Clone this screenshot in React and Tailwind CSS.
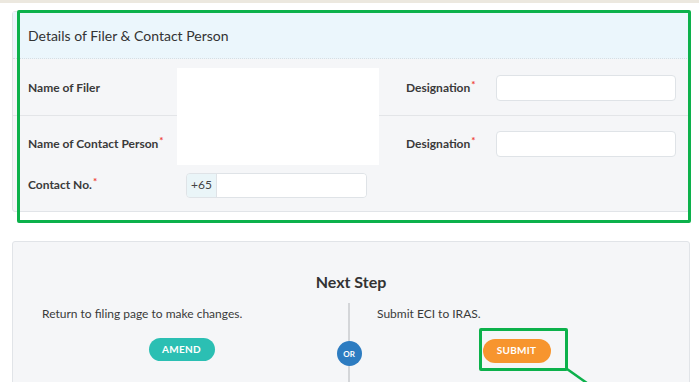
const Req = () => <span className="text-[#ef4136] text-[10px] font-bold align-top leading-none ml-[1px]">*</span>;

const Label = ({ children, required }) => (
  <div className="text-[12px] font-bold text-[#3a3a3a]">
    {children}
    {required && <Req />}
  </div>
);

const TextInput = ({ w = "w-[180px]" }) => (
  <div className={`${w} h-[26px] bg-white border border-[#dfe3e7] rounded-[4px]`} />
);

const FilerDetails = () => (
  <div className="relative ml-[12px] mr-[9px] mt-[8px] bg-[#f5f6f8] border border-[#e1e4e8] rounded-[3px]">
    <div className="h-[47px] bg-[#ebf6fc] border-b border-dotted border-[#d7dde2] flex items-center pl-[15px] text-[14px] text-[#333]">
      Details of Filer &amp; Contact Person
    </div>
    <div className="h-[57px] pt-[2px] border-b border-[#e3e5e8] flex items-center pl-[15px]">
      <div className="w-[158px]">
        <Label>Name of Filer</Label>
      </div>
      <div className="w-[220px]" />
      <div className="w-[90px]">
        <Label required>Designation</Label>
      </div>
      <TextInput />
    </div>
    <div className="h-[52px] pt-[4px] flex items-center pl-[15px]">
      <div className="w-[158px]">
        <Label required>Name of Contact Person</Label>
      </div>
      <div className="w-[220px]" />
      <div className="w-[90px]">
        <Label required>Designation</Label>
      </div>
      <TextInput />
    </div>
    <div className="h-[34px] flex items-center pl-[15px] mb-[9px]">
      <div className="w-[158px]">
        <Label required>Contact No.</Label>
      </div>
      <div className="flex h-[25px] border border-[#dfe3e7] rounded-[4px] overflow-hidden">
        <div className="w-[30px] bg-[#eaf5f8] border-r border-[#dfe3e7] flex items-center justify-center text-[12px] text-[#444]">
          +65
        </div>
        <div className="w-[149px] bg-white" />
      </div>
    </div>
    {/* redacted filer name */}
    <div className="absolute left-[164px] top-[56px] w-[202px] h-[97px] bg-white" />
    {/* annotation frame */}
    <div className="absolute left-[4px] -top-[2px] w-[674px] h-[213px] border-[3px] border-[#0cb14b] rounded-[2px] pointer-events-none" />
  </div>
);

const NextStep = () => (
  <div className="relative ml-[12px] mr-[9px] mt-[29px] bg-[#f5f6f8] border border-[#e1e4e8] rounded-[3px] h-[160px]">
    <div className="pt-[28px] text-center text-[16px] font-bold text-[#333]">Next Step</div>
    <div className="flex mt-[9px]">
      <div className="w-[335px] pt-[2px]">
        <div className="pl-[29px] text-[12px] text-[#3a3a3a]">Return to filing page to make changes.</div>
        <div className="flex justify-center mt-[15px] pl-[2px]">
          <button className="w-[66px] h-[23px] rounded-full bg-[#2bbfb3] text-white text-[10px] font-bold tracking-[0.3px]">
            AMEND
          </button>
        </div>
      </div>
      <div className="relative w-[2px] h-[100px] bg-[#d4d6d9] flex justify-center">
        <div className="absolute top-[38px] w-[25px] h-[25px] rounded-full bg-[#2d7cc1] text-white text-[8px] font-bold flex items-center justify-center">
          OR
        </div>
      </div>
      <div className="flex-1 pt-[2px]">
        <div className="pl-[27px] text-[12px] text-[#3a3a3a]">Submit ECI to IRAS.</div>
        <div className="flex justify-center mt-[13px] pr-[6px]">
          <div className="relative">
            <button className="w-[68px] h-[24px] rounded-full bg-[#f7952e] text-white text-[10px] font-bold tracking-[0.3px]">
              SUBMIT
            </button>
            <div className="absolute -left-[4px] -top-[8px] w-[89px] h-[43px] border-[3px] border-[#0cb14b] rounded-[2px]" />
          </div>
        </div>
      </div>
    </div>
    <svg className="absolute left-[552px] top-[125px]" width="40" height="30" viewBox="0 0 40 30">
      <line x1="2" y1="2" x2="36" y2="26" stroke="#0cb14b" strokeWidth="2.5" />
    </svg>
  </div>
);

export default function App() {
  return (
    <div className="w-[699px] h-[382px] overflow-hidden bg-white" style={{ fontFamily: "Lato, 'Noto Sans', sans-serif" }}>
      <div className="h-[3px] bg-[#ece8df]" />
      <FilerDetails />
      <NextStep />
    </div>
  );
}
